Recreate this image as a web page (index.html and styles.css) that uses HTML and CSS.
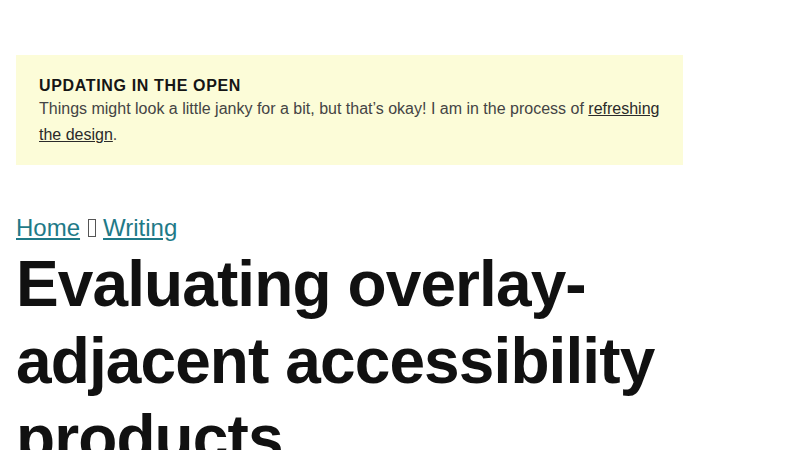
FILE: index.html
```html
<!DOCTYPE html>
<html lang="en">
<head>
<meta charset="utf-8">
<title>Evaluating overlay-adjacent accessibility products</title>
<link rel="stylesheet" href="styles.css">
</head>
<body>
<div class="page">
  <aside class="notice">
    <p class="notice-title">UPDATING IN THE OPEN</p>
    <p class="notice-text">Things might look a little janky for a bit, but that’s okay! I am in the process of <a href="#">refreshing the design</a>.</p>
  </aside>
  <nav class="crumbs">
    <a href="#">Home</a><span class="sep" aria-hidden="true"></span><a href="#">Writing</a>
  </nav>
  <h1 class="title">Evaluating overlay-adjacent accessibility products</h1>
</div>
</body>
</html>
```
FILE: styles.css
```css
html, body {
  margin: 0;
  padding: 0;
  background: #ffffff;
}
body {
  font-family: "Liberation Sans", Arial, sans-serif;
  color: #111111;
}
.page {
  padding: 55px 16px 0 16px;
  width: 667px;
}
.notice {
  background: #fcfcd8;
  padding: 21px 23px 17px 23px;
}
.notice-title {
  margin: 0;
  font-weight: bold;
  font-size: 16px;
  letter-spacing: 0.65px;
  line-height: 20px;
  color: #151515;
}
.notice-text {
  margin: 0;
  font-size: 16px;
  line-height: 26px;
  color: #444444;
}
.notice-text a {
  color: #2a2a2a;
}
.crumbs {
  margin-top: 47px;
  font-size: 24px;
  line-height: 32px;
  display: flex;
  align-items: center;
}
.crumbs a {
  color: #1f7a88;
}
.sep {
  display: inline-block;
  width: 6px;
  height: 16px;
  border: 1px solid #555;
  margin: 0 7px 0 8px;
}
.title {
  margin: 2px 0 0 0;
  font-size: 64px;
  line-height: 77px;
  font-weight: bold;
  letter-spacing: -0.9px;
  color: #111111;
}
```
